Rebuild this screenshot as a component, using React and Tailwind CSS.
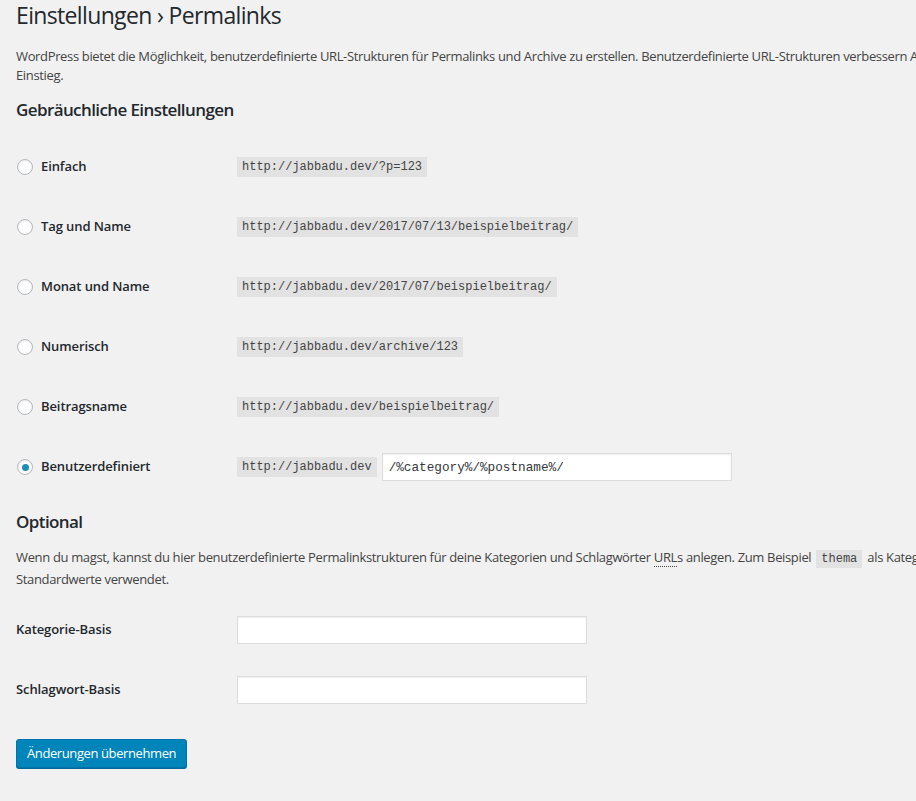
import React from "react";

function Radio({ checked }) {
  return (
    <span className="inline-flex items-center justify-center w-4 h-4 rounded-full border border-[#b4b9be] bg-white shadow-[inset_0_1px_2px_rgba(0,0,0,0.1)] shrink-0">
      {checked && <span className="w-[7px] h-[7px] rounded-full bg-[#1e8cbe]" />}
    </span>
  );
}

function Code({ children }) {
  return (
    <code className="bg-[#e2e2e2] text-[#444] px-[5px] py-[2px] text-[12px] leading-[16px] font-['Liberation_Mono',monospace]">
      {children}
    </code>
  );
}

const rows = [
  ["Einfach", "http://jabbadu.dev/?p=123"],
  ["Tag und Name", "http://jabbadu.dev/2017/07/13/beispielbeitrag/"],
  ["Monat und Name", "http://jabbadu.dev/2017/07/beispielbeitrag/"],
  ["Numerisch", "http://jabbadu.dev/archive/123"],
  ["Beitragsname", "http://jabbadu.dev/beispielbeitrag/"],
];

const labelCls = "text-[13px] font-semibold text-[#23282d] tracking-[-0.1px]";

export default function App() {
  return (
    <div className="w-[916px] h-[801px] overflow-hidden bg-[#f1f1f1] font-['Open_Sans','Noto_Sans',sans-serif]">
      <div className="w-[1300px] pl-4">
        <h1 className="text-[23px] leading-[30px] font-normal text-[#23282d] tracking-[-0.65px]">
          Einstellungen › Permalinks
        </h1>
        <p className="mt-[17px] text-[13px] leading-[19px] text-[#444] tracking-[-0.35px] whitespace-nowrap">
          WordPress bietet die Möglichkeit, benutzerdefinierte URL-Strukturen für Permalinks und Archive zu erstellen. Benutzerdefinierte URL-Strukturen verbessern Aussehen, Benutzerfreundlichkeit und die Zukunftssicherheit deiner Links. Hier sind ein paar Beispiele für den
          <br />
          Einstieg.
        </p>
        <h2 className="mt-[14px] text-[17px] leading-[22px] font-semibold text-[#23282d] tracking-[-0.6px]">
          Gebräuchliche Einstellungen
        </h2>
        <div className="mt-[16px]">
          {rows.map(([label, url]) => (
            <div key={label} className="h-[60px] flex items-center">
              <div className="w-[221px] flex items-center gap-[8px] pl-[1px]">
                <Radio />
                <span className={labelCls}>{label}</span>
              </div>
              <Code>{url}</Code>
            </div>
          ))}
          <div className="h-[60px] flex items-center">
            <div className="w-[221px] flex items-center gap-[8px] pl-[1px]">
              <Radio checked />
              <span className={labelCls}>Benutzerdefiniert</span>
            </div>
            <Code>http://jabbadu.dev</Code>
            <input
              readOnly
              value="/%category%/%postname%/"
              className="ml-[5px] w-[350px] h-[28px] bg-white border border-[#ddd] shadow-[inset_0_1px_2px_rgba(0,0,0,0.07)] px-[6px] text-[12.7px] text-[#32373c] font-['Liberation_Mono',monospace] outline-none"
            />
          </div>
        </div>
        <h2 className="mt-[14px] text-[17px] leading-[22px] font-semibold text-[#23282d] tracking-[-0.6px]">
          Optional
        </h2>
        <p className="mt-[14px] text-[13px] leading-[20px] text-[#444] tracking-[-0.35px] whitespace-nowrap">
          Wenn du magst, kannst du hier benutzerdefinierte Permalinkstrukturen für deine Kategorien und Schlagwörter{" "}
          <abbr className="no-underline border-b border-dotted border-[#444]" title="Uniform Resource Locator">URL</abbr>s anlegen. Zum Beispiel{" "}
          <code className="bg-[#e2e2e2] text-[#444] px-[5px] py-[2px] mx-[2px] text-[12px] tracking-normal font-['Liberation_Mono',monospace]">thema</code>{" "}
          als Kategorie-Basis. Wenn diese Felder leer bleiben, werden die
          <br />
          Standardwerte verwendet.
        </p>
        <div className="mt-[11px]">
          {["Kategorie-Basis", "Schlagwort-Basis"].map((l) => (
            <div key={l} className="h-[60px] flex items-center">
              <div className={"w-[221px] " + labelCls}>{l}</div>
              <input
                readOnly
                className="w-[350px] h-[28px] bg-white border border-[#ddd] shadow-[inset_0_1px_2px_rgba(0,0,0,0.07)] outline-none"
              />
            </div>
          ))}
        </div>
        <button className="mt-[19px] h-[29px] px-[10px] rounded-[3px] bg-[#0085ba] border border-[#0073aa] shadow-[0_1px_0_#006799] text-white text-[13px] tracking-[-0.4px]">
          Änderungen übernehmen
        </button>
      </div>
    </div>
  );
}
